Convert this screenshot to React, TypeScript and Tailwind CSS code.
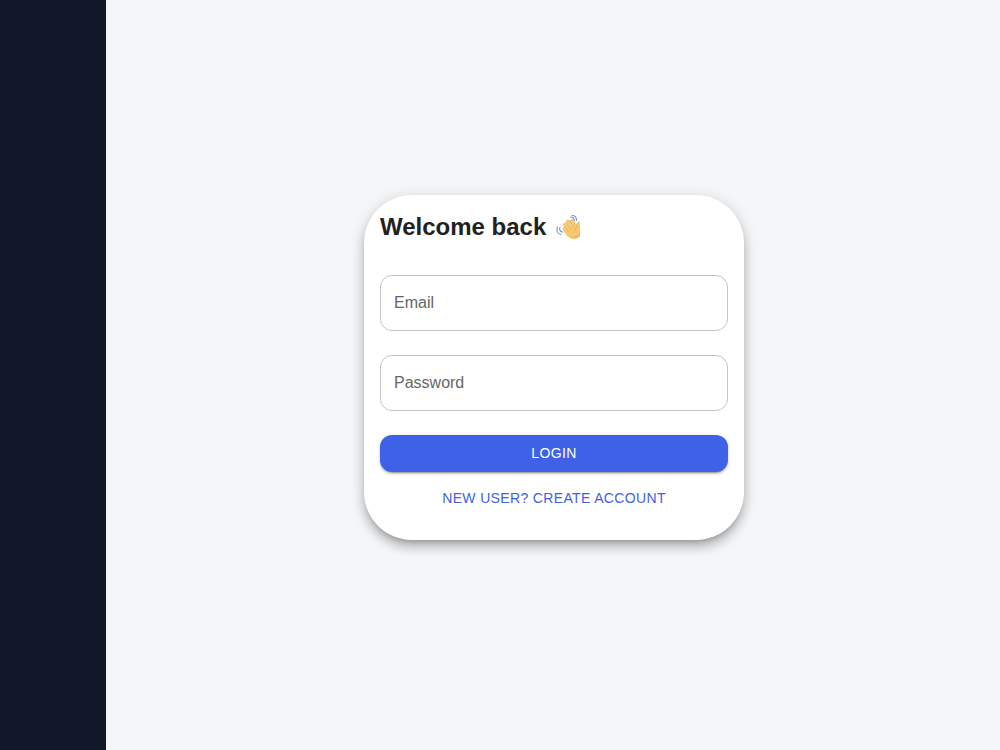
import { useState } from "react";
import type { FormEvent } from "react";

function WavingHand() {
  return (
    <svg viewBox="0 0 48 48" className="h-6 w-6 shrink-0" role="img" aria-label="Waving hand">
      <g fill="none" stroke="#6f9bd0" strokeWidth="2.2" strokeLinecap="round">
        <path d="M29 4 Q36 4 37 12" />
        <path d="M32 1 Q41 1 41 11" />
        <path d="M8 25 Q5 32 13 34" />
        <path d="M3 24 Q-1 36 10 39" />
      </g>
      <g fill="none" stroke="#f6cb78" strokeWidth="8" strokeLinecap="round">
        <path d="M17 28 L25 37" />
        <path d="M18 19 L28 32" />
        <path d="M24 13 L34 28" />
        <path d="M32 12 L40 26" />
        <path d="M45 17 Q43 23 46 29" />
      </g>
      <path d="M14 31 L40 20 L48 27 V42 C44 46 40 47 35 47 C27 47 20 41 14 31 Z" fill="#f8c96c" />
      <path d="M22 40 C29 46 41 45 48 35 V42 C44 46 40 47 35 47 C30 47 26 44 22 40 Z" fill="#f5b550" />
      <g fill="none" stroke="#dfa35a" strokeWidth="1.2" strokeLinecap="round">
        <path d="M16 22 L25 33" />
        <path d="M20 15 L30 29" />
        <path d="M28 12 L36 25" />
        <path d="M41 20 L42 25 Q37 27 37 32" />
      </g>
    </svg>
  );
}

interface FieldProps {
  id: string;
  label: string;
  type: string;
  value: string;
  onChange: (value: string) => void;
}

/* Outlined text box whose label rests inside and rises onto the border when in use. */
function Field({ id, label, type, value, onChange }: FieldProps) {
  return (
    <div className="relative">
      <input
        id={id}
        type={type}
        value={value}
        placeholder=" "
        onChange={(event) => onChange(event.target.value)}
        className="peer block h-14 w-full rounded-xl border border-[#c4c4c4] bg-white px-[13px] text-base text-[#212121] outline-none focus:border-[#3f61e8]"
      />
      <label
        htmlFor={id}
        className="pointer-events-none absolute -top-2 left-3.5 bg-white text-xs text-[#666666] transition-all peer-placeholder-shown:top-4 peer-placeholder-shown:text-base peer-focus:-top-2 peer-focus:text-xs peer-focus:text-[#3f61e8]"
      >
        {label}
      </label>
    </div>
  );
}

export default function App() {
  const [email, setEmail] = useState("");
  const [password, setPassword] = useState("");

  const handleSubmit = (event: FormEvent) => event.preventDefault();

  return (
    <div className="flex min-h-screen bg-[#f4f6f8] font-['Liberation_Sans',Arial,sans-serif]">
      <aside className="w-[106px] shrink-0 bg-[#111729]" />
      <main className="flex flex-1 items-center justify-center pb-4 pl-0.5">
        <form
          onSubmit={handleSubmit}
          className="flex w-full max-w-[380px] flex-col rounded-[48px] bg-white px-4 pt-4 pb-6 shadow-[0_5px_5px_-3px_rgba(0,0,0,0.2),0_8px_10px_1px_rgba(0,0,0,0.14),0_3px_14px_2px_rgba(0,0,0,0.12)]"
        >
          <h1 className="flex items-center gap-2.5 text-2xl font-bold text-[#212121]">
            Welcome back
            <WavingHand />
          </h1>
          <div className="mt-8 flex flex-col gap-6">
            <Field id="email" label="Email" type="email" value={email} onChange={setEmail} />
            <Field id="password" label="Password" type="password" value={password} onChange={setPassword} />
            <button
              type="submit"
              className="h-[37px] rounded-xl bg-[#3f61e8] text-sm font-medium tracking-wide text-white uppercase shadow-[0_3px_1px_-2px_rgba(0,0,0,0.2),0_2px_2px_0_rgba(0,0,0,0.14),0_1px_5px_0_rgba(0,0,0,0.12)]"
            >
              Login
            </button>
          </div>
          <a
            href="#register"
            className="mt-2 flex h-9 items-center justify-center rounded-xl text-sm font-medium tracking-wide text-[#3f61e8] uppercase"
          >
            New user? Create account
          </a>
        </form>
      </main>
    </div>
  );
}
